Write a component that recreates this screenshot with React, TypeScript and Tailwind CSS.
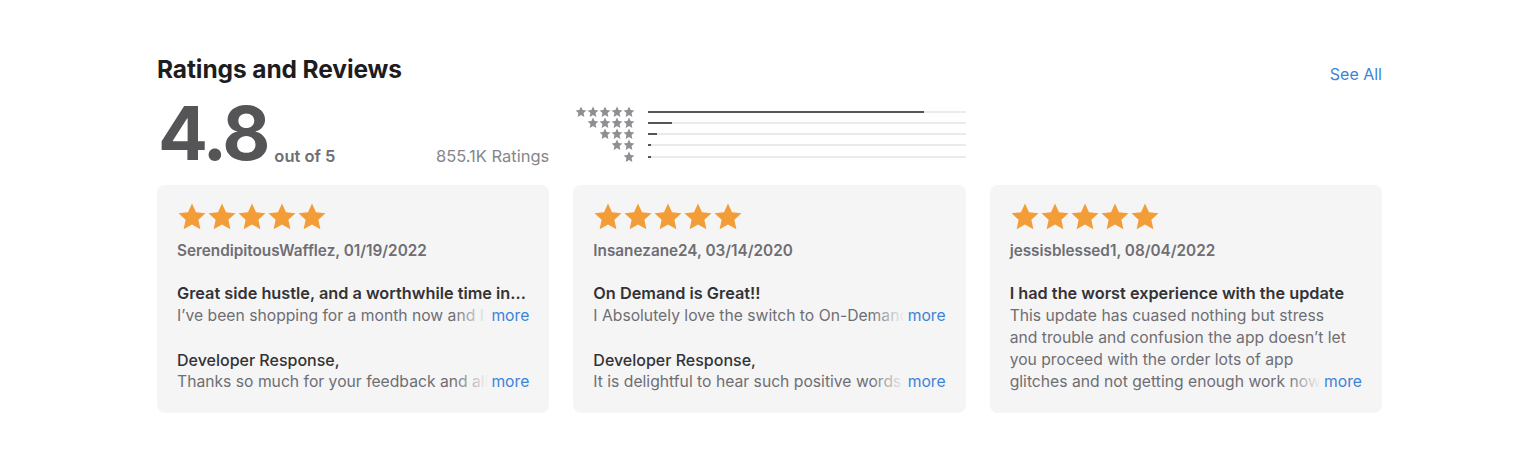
const STAR = "12,1.2 15.2,8.2 22.8,9 17.1,14.2 18.7,21.8 12,17.9 5.3,21.8 6.9,14.2 1.2,9 8.8,8.2";

function Star({ className }: { className: string }) {
  return (
    <svg viewBox="0 0 24 24" className={className}>
      <polygon points={STAR} fill="currentColor" />
    </svg>
  );
}

const histogram = [
  { stars: 5, pct: 87 },
  { stars: 4, pct: 7.5 },
  { stars: 3, pct: 2.6 },
  { stars: 2, pct: 0.8 },
  { stars: 1, pct: 0.8 },
];

// truncated line that fades out just before the "more" link
function FadeLine({ text }: { text: string }) {
  return (
    <div className="flex items-center">
      <div className="relative min-w-0 flex-1 overflow-hidden whitespace-nowrap">
        {text}
        <div className="absolute inset-y-0 right-0 w-[34px] bg-gradient-to-r from-[#f5f5f6]/0 to-[#f5f5f6]" />
      </div>
      <span className="shrink-0 pl-[3px] text-[#3d83d6]">more</span>
    </div>
  );
}

type Review = {
  author: string;
  title: string;
  body: string[];
  response?: string;
};

const reviews: Review[] = [
  {
    author: "SerendipitousWafflez, 01/19/2022",
    title: "Great side hustle, and a worthwhile time in...",
    body: ["I’ve been shopping for a month now and  I really enjoy it"],
    response: "Thanks so much for your feedback and all the kind words",
  },
  {
    author: "Insanezane24, 03/14/2020",
    title: "On Demand is Great!!",
    body: ["I Absolutely love the switch to On-Demand shopping"],
    response: "It is delightful to hear such positive words from you",
  },
  {
    author: "jessisblessed1, 08/04/2022",
    title: "I had the worst experience with the update",
    body: [
      "This update has cuased nothing but stress",
      "and trouble and confusion the app doesn’t let",
      "you proceed with the order lots of app",
      "glitches and not getting enough work now",
    ],
  },
];

function ReviewCard({ r }: { r: Review }) {
  const last = r.body.length - 1;
  return (
    <div className="h-[228px] rounded-[8px] bg-[#f5f5f6] px-5 pt-[17px] text-[15.7px] leading-[22.3px]">
      <div className="flex">
        {[0, 1, 2, 3, 4].map((i) => (
          <Star key={i} className="h-[30px] w-[30px] text-[#f29d38]" />
        ))}
      </div>
      <div className="mt-[8px] text-[15.3px] font-semibold text-[#6e6e73]">{r.author}</div>
      <div className="mt-[20px] text-[16.3px] font-semibold text-[#333336]">{r.title}</div>
      <div className="text-[#6e6e73]">
        {r.body.map((line, i) =>
          i === last ? <FadeLine key={i} text={line} /> : <div key={i}>{line}</div>
        )}
      </div>
      {r.response && (
        <>
          <div className="mt-[22px] text-[16px] font-medium text-[#333336]">Developer Response,</div>
          <div className="text-[#6e6e73]">
            <FadeLine text={r.response} />
          </div>
        </>
      )}
    </div>
  );
}

export default function App() {
  return (
    <div className="h-[458px] w-full bg-white font-['Inter',sans-serif] antialiased">
      <div className="ml-[157px] w-[1225px] pt-[54px]">
        <div className="flex items-end justify-between">
          <h2 className="text-[24.5px] font-bold leading-[30px] tracking-[-0.1px] text-[#1d1d1f]">
            Ratings and Reviews
          </h2>
          <a className="mb-[-2px] text-[16px] text-[#3d83d6]">See All</a>
        </div>

        <div className="mt-[15px] grid grid-cols-3 gap-6">
          <div className="flex items-end justify-between">
            <div className="flex items-end">
              <span className="ml-[1px] text-[74px] font-bold leading-[68px] tracking-[-3px] text-[#555558]">
                4.8
              </span>
              <span className="mb-[-2px] ml-[7px] text-[16.5px] font-semibold text-[#6e6e73]">out of 5</span>
            </div>
            <span className="mb-[-2px] text-[16.5px] text-[#86868b]">855.1K Ratings</span>
          </div>

          <div className="flex flex-col pt-[7px]">
            {histogram.map((h) => (
              <div key={h.stars} className="flex h-[11.25px] items-center">
                <div className="flex w-[62px] justify-end">
                  {Array.from({ length: h.stars }).map((_, i) => (
                    <Star key={i} className="h-[12px] w-[12px] text-[#8e8e93]" />
                  ))}
                </div>
                <div className="ml-[13px] h-[2px] flex-1 bg-[#ebebed]">
                  <div className="h-full min-w-[3px] bg-[#555558]" style={{ width: `${h.pct}%` }} />
                </div>
              </div>
            ))}
          </div>
          <div />
        </div>

        <div className="mt-[18px] grid grid-cols-3 gap-6">
          {reviews.map((r) => (
            <ReviewCard key={r.author} r={r} />
          ))}
        </div>
      </div>
    </div>
  );
}
